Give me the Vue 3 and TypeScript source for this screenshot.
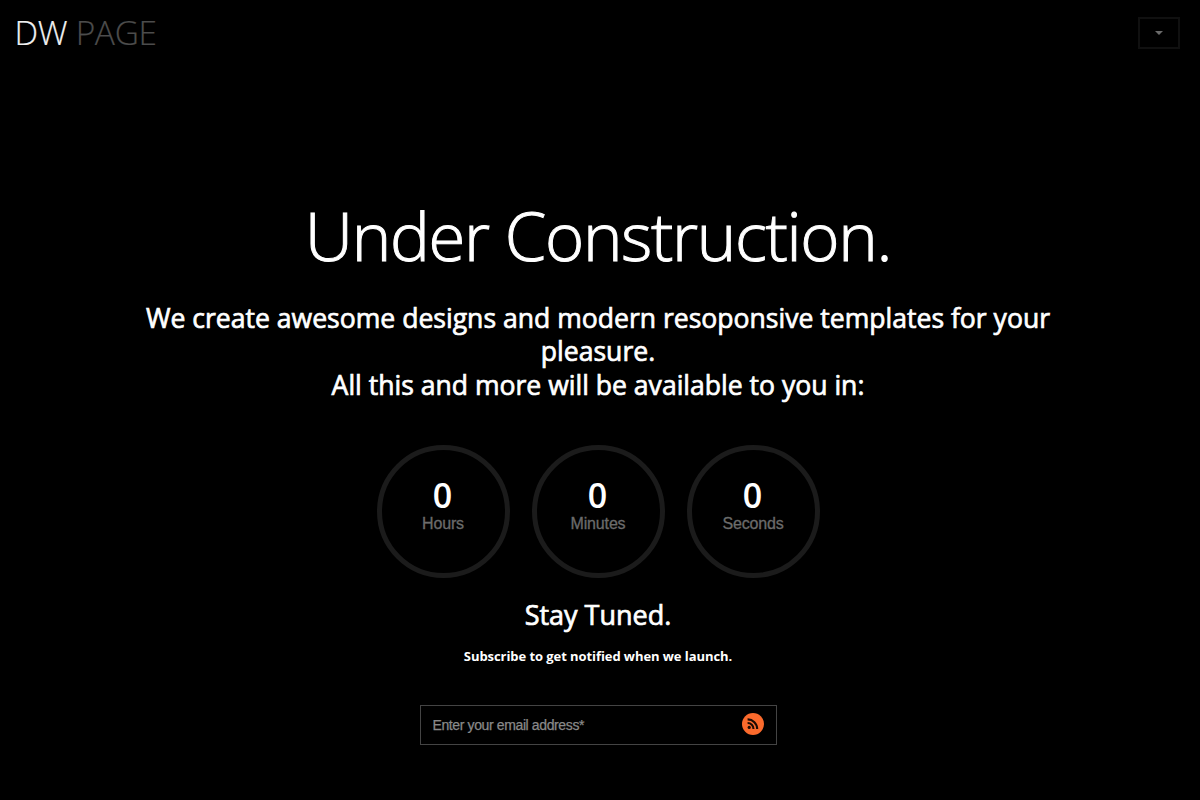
<script setup lang="ts">
import { ref } from 'vue'

interface Unit {
  label: string
  value: number
}

const units: Unit[] = [
  { label: 'Hours', value: 0 },
  { label: 'Minutes', value: 0 },
  { label: 'Seconds', value: 0 },
]
const email = ref('')
</script>

<template>
  <div class="page">
    <header class="top">
      <div class="logo">DW <span class="dim">PAGE</span></div>
      <button class="toggle" aria-label="Menu">
        <svg width="8" height="4" viewBox="0 0 8 4"><path d="M0 0H8L4 4Z" fill="#6a6a6a" /></svg>
      </button>
    </header>
    <main class="content">
      <h1>Under Construction.</h1>
      <p class="lead">
        We create awesome designs and modern resoponsive templates for your<br />pleasure.<br />All this and more
        will be available to you in:
      </p>
      <div class="timer">
        <div v-for="u in units" :key="u.label" class="ring">
          <span class="value">{{ u.value }}</span>
          <span class="label">{{ u.label }}</span>
        </div>
      </div>
      <h2>Stay Tuned.</h2>
      <h3>Subscribe to get notified when we launch.</h3>
      <form class="subscribe" @submit.prevent>
        <input v-model="email" type="text" placeholder="Enter your email address*" />
        <button class="send" aria-label="Subscribe">
          <svg width="22" height="22" viewBox="0 0 22 22">
            <circle cx="11" cy="11" r="11" fill="#fb6a2c" />
            <circle cx="7.2" cy="14.4" r="1.6" fill="#1c0b04" />
            <path d="M5.6 10A5.8 5.8 0 0 1 11.5 15.9M5.6 6.4A9.5 9.5 0 0 1 15.2 15.9" fill="none" stroke="#1c0b04" stroke-width="2.1" />
          </svg>
        </button>
      </form>
    </main>
  </div>
</template>

<style>
body {
  background: #000;
}
</style>

<style scoped>
.page {
  width: 1200px;
  height: 800px;
  overflow: hidden;
  background: #000;
  color: #fff;
  font-family: 'Open Sans', sans-serif;
}
.top {
  display: flex;
  justify-content: space-between;
  box-sizing: border-box;
  height: 195px;
  padding: 9px 20px 0 14.5px;
}
.logo {
  height: 46px;
  color: #f0f0f0;
  font-size: 33.4px;
  font-weight: 300;
  line-height: 46px;
  letter-spacing: -0.3px;
  -webkit-text-stroke: 0.2px currentColor;
}
.dim {
  color: #4c4c4c;
}
.toggle {
  display: flex;
  align-items: center;
  justify-content: center;
  box-sizing: border-box;
  width: 42px;
  height: 32px;
  margin-top: 8px;
  padding: 0;
  border: 2px solid #101010;
  background: #000;
}
.content {
  display: flex;
  flex-direction: column;
  align-items: center;
  width: 1196px;
}
h1,
h2,
h3,
p {
  margin: 0;
  text-align: center;
}
h1 {
  height: 107px;
  font-size: 67px;
  font-weight: 300;
  line-height: 80px;
  letter-spacing: -1.34px;
  -webkit-text-stroke: 1px #fff;
}
.lead {
  height: 143px;
  font-size: 26.57px;
  line-height: 33.3px;
  white-space: nowrap;
  -webkit-text-stroke: 0.7px #fff;
}
.timer {
  display: flex;
  gap: 22px;
  height: 153px;
}
.ring {
  display: flex;
  flex-direction: column;
  align-items: center;
  box-sizing: border-box;
  width: 133px;
  height: 133px;
  padding-top: 28px;
  border: 5px solid #1b1b1b;
  border-radius: 50%;
}
.value {
  margin-right: 1px;
  font-size: 34px;
  font-weight: 600;
  line-height: 34px;
}
.label {
  margin-top: 2px;
  color: #6b6b6b;
  font: 16px/20px 'Liberation Sans', Arial, sans-serif;
  letter-spacing: -0.15px;
  -webkit-text-stroke: 0.3px #6b6b6b;
}
h2 {
  height: 48px;
  font-size: 27px;
  font-weight: 400;
  line-height: 33px;
  -webkit-text-stroke: 0.7px #fff;
}
h3 {
  height: 59px;
  font-size: 13px;
  font-weight: 700;
  line-height: 20px;
  letter-spacing: -0.07px;
}
.subscribe {
  display: flex;
  align-items: center;
  box-sizing: border-box;
  width: 357px;
  height: 40px;
  padding: 0 12px;
  border: 1px solid #444;
}
input {
  flex: 1;
  min-width: 0;
  padding: 0;
  border: 0;
  outline: 0;
  background: transparent;
  color: #fff;
  font: 14px/20px 'Liberation Sans', Arial, sans-serif;
  letter-spacing: -0.38px;
}
input::placeholder {
  color: #898989;
  -webkit-text-stroke: 0.25px #898989;
}
.send {
  display: flex;
  margin-top: -2px;
  padding: 0;
  border: 0;
  background: transparent;
}
</style>
